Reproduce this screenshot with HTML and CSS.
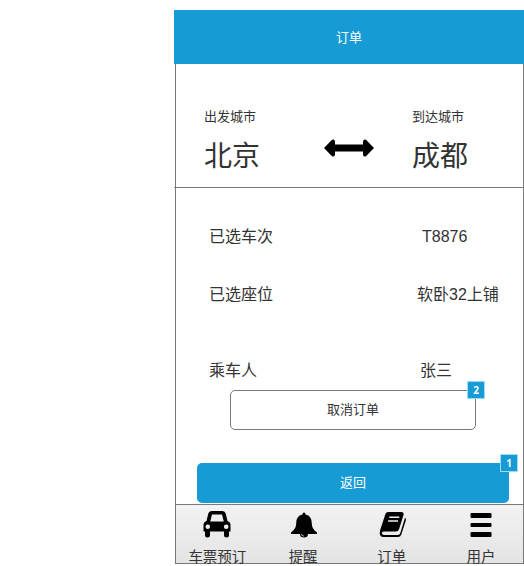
FILE: index.html
```html
<!DOCTYPE html>
<html lang="zh-CN">
<head>
<meta charset="utf-8">
<title>订单</title>
<link rel="stylesheet" href="styles.css">
</head>
<body>
<main class="phone">
  <header class="header">订单</header>
  <section class="route">
    <div class="city"><span class="city-label">出发城市</span><span class="city-name">北京</span></div>
    <svg class="arrow" width="50" height="18" viewBox="0 0 50 18"><path d="M0 9 8 .8Q11-.5 11 3V5.5H39V3Q39-.5 42 .8L50 9 42 17.2Q39 18.5 39 15V12.5H11V15Q11 18.5 8 17.2Z"/></svg>
    <div class="city"><span class="city-label">到达城市</span><span class="city-name">成都</span></div>
  </section>
  <section class="details">
    <div class="row"><span>已选车次</span><span class="value train">T8876</span></div>
    <div class="row"><span>已选座位</span><span class="value">软卧32上铺</span></div>
    <div class="row passenger"><span>乘车人</span><span class="value name">张三</span></div>
    <button class="button cancel">取消订单<span class="badge">2</span></button>
    <button class="button back">返回<span class="badge">1</span></button>
  </section>
  <nav class="tabs">
    <a class="tab booking">
      <svg width="28" height="28" viewBox="0 0 28 28"><path fill-rule="evenodd" d="M8.500 1H19.500Q22 1 22.700 3.500L24.500 11Q27.500 12 27.500 15V21.500H26V25Q26 27.500 23.500 27.500T21 25V21.500H7V25Q7 27.500 4.500 27.500T2 25V21.500H.5V15Q.5 12 3.500 11L5.300 3.500Q6 1 8.500 1ZM9 4.500 7.200 11.500H20.800L19 4.500ZM4.800 14.500A2.300 2.300 0 1 0 4.800 19.100 2.300 2.300 0 0 0 4.800 14.500ZM23.200 14.500A2.300 2.300 0 1 0 23.200 19.100 2.300 2.300 0 0 0 23.200 14.500Z"/></svg>
      <span>车票预订</span>
    </a>
    <a class="tab alerts">
      <svg width="28" height="28" viewBox="-1 0 28 28"><path d="M14 2.500Q15.500 2.500 15.500 4.500C20 5.500 21.500 8.500 21.700 12.500C22 18.500 24 20 27 22.500V24H18A4 3.500 0 0 1 10 24H1V22.500C4 20 6 18.500 6.300 12.500C6.500 8.500 8 5.500 12.500 4.500Q12.500 2.500 14 2.500Z"/><path d="M11.500 24Q11.800 26 14 26.200" fill="none" stroke="#eee" stroke-width=".8"/></svg>
      <span>提醒</span>
    </a>
    <a class="tab orders">
      <svg width="28" height="28" viewBox="-1.300 -.5 28 28"><path d="M9 1.500H22Q25 1.500 24.200 4.500L19.800 18.500Q19 21 16.500 21H4.500Q2.500 21 2.500 22.500T4.500 24.500H18.500Q20.500 24.500 21 22.500L25.700 7.200Q27 8 26.500 10L22 24Q21.200 26.500 18.500 26.500H4Q1 26.500 .5 23.500Q.2 21.500 1.200 18.500L5.800 4.500Q6.500 1.500 9 1.500Z"/><path d="M10 6.800H20M8.800 10.500H18.800" fill="none" stroke="#eee" stroke-width="1.500"/></svg>
      <span>订单</span>
    </a>
    <a class="tab user">
      <svg width="28" height="28" viewBox="0 0 28 28"><rect x="3.500" y="3" width="21" height="5" rx="1"/><rect x="3.500" y="13" width="21" height="4" rx="1"/><rect x="3.500" y="22" width="21" height="5" rx="1"/></svg>
      <span>用户</span>
    </a>
  </nav>
</main>
</body>
</html>
```
FILE: styles.css
```css
* { box-sizing: border-box; }
body {
  margin: 0;
  overflow: hidden;
  background: #fff;
  color: #333;
  font-family: "Liberation Sans", "Noto Sans CJK SC", sans-serif;
  font-weight: 400;
}
.phone { width: 350px; margin: 10px 0 0 174px; }
.header {
  height: 54px;
  background: #169bd5;
  color: #fff;
  font-size: 13px;
  line-height: 55px;
  text-align: center;
}
.route {
  display: grid;
  grid-template-columns: 120px 88px 1fr;
  height: 124px;
  padding: 43px 0 0 30px;
  border-bottom: 1px solid #797979;
  background: linear-gradient(#797979, #797979) 1px 0 / 1px 100% no-repeat;
  border-right: 1px solid #797979;
}
.city { display: flex; flex-direction: column; }
.city-label { font-size: 13px; line-height: 20px; }
.city-name { font-size: 28px; line-height: 40px; margin-top: 10px; }
.arrow { margin-top: 32px; }
.details {
  display: flex;
  flex-direction: column;
  height: 316px;
  margin-left: 1px;
  padding: 37px 14px 0 21px;
  border: solid #797979;
  border-width: 0 1px;
}
.row {
  display: grid;
  grid-template-columns: 208px 1fr;
  height: 24px;
  margin: 0 0 34px 12px;
  font-size: 16px;
  line-height: 24px;
  white-space: nowrap;
}
.train { padding-left: 5px; }
.name { padding-left: 3px; }
.passenger { margin-top: 18px; margin-bottom: 7px; }
.button {
  position: relative;
  flex: none;
  height: 40px;
  padding: 0;
  border-radius: 5px;
  font: inherit;
  font-size: 13px;
  line-height: 38px;
}
.cancel {
  width: 246px;
  margin-left: 33px;
  border: 1px solid #797979;
  background: #fff;
  color: #333;
}
.back {
  width: 312px;
  margin-top: 33px;
  border: 0;
  background: #169bd5;
  color: #fff;
}
.badge {
  position: absolute;
  top: -10px;
  right: -10px;
  width: 18px;
  height: 18px;
  border: 1px solid #9bdcf8;
  background: #169bd5;
  color: #fff;
  font: bold 10px/16px "Open Sans", sans-serif;
  text-align: center;
}
.back .badge { top: -9px; right: -9px; }
.tabs {
  display: flex;
  height: 60px;
  margin-left: 1px;
  border: 1px solid #797979;
  background: linear-gradient(#f2f2f2, #e4e4e4);
}
.tab {
  display: flex;
  flex-direction: column;
  align-items: center;
  padding-top: 5px;
  font-size: 14.5px;
  line-height: 20px;
}
.tab svg { flex: none; margin-bottom: 9px; }
.booking { width: 83px; }
.alerts { width: 89px; }
.orders { width: 89px; }
.user { width: 87px; padding-left: 3px; }
```
